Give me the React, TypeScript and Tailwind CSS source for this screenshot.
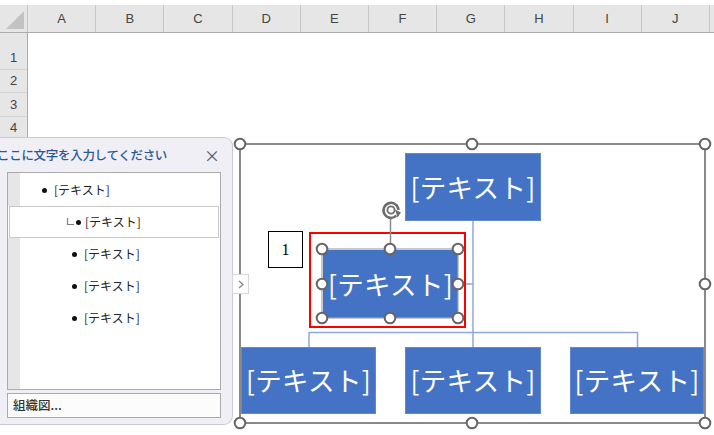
import React from 'react';

const cols = ['A', 'B', 'C', 'D', 'E', 'F', 'G', 'H', 'I', 'J'];
// rows 5 and below sit behind the text pane, so their numbers are left out
const rows = [
  { n: '1', h: 'h-[37px]' },
  { n: '2', h: 'h-[23px]' },
  { n: '3', h: 'h-[24px]' },
  { n: '4', h: 'h-[23px]' },
  { n: '', h: 'h-[23px]' },
  { n: '', h: 'h-[23px]' },
  { n: '', h: 'h-[23px]' },
  { n: '', h: 'h-[23px]' },
  { n: '', h: 'h-[23px]' },
  { n: '', h: 'h-[23px]' },
  { n: '', h: 'h-[23px]' },
  { n: '', h: 'h-[23px]' },
  { n: '', h: 'h-[23px]' },
  { n: '', h: 'h-[23px]' },
  { n: '', h: 'h-[23px]' },
];

const items = [
  { level: 1, selected: false },
  { level: 2, selected: true },
  { level: 2, selected: false },
  { level: 2, selected: false },
  { level: 2, selected: false },
];

function Sheet() {
  return (
    <div className="font-['Liberation_Sans',sans-serif] text-[13px] text-[#444]">
      <div className="h-[5px]" />
      <div className="grid grid-cols-[28px_repeat(10,68.2px)_1fr] h-[28px] bg-[#E6E6E6] border-b border-[#ABABAB]">
        <div className="relative border-r border-[#C6C6C6]">
          <svg className="absolute left-0 top-0" width="28" height="28">
            <polygon points="24,6 24,24 6,24" fill="#C2C2C2" />
          </svg>
        </div>
        {cols.map((c) => (
          <div key={c} className="flex items-center justify-center border-r border-[#C6C6C6]">
            {c}
          </div>
        ))}
        <div />
      </div>
      <div className="flex">
        <div className="w-[28px] bg-[#E6E6E6] border-r border-[#ABABAB]">
          {rows.map((r, i) => (
            <div key={i} className={`${r.h} flex items-end justify-center pb-[2px] border-b border-[#D4D4D4]`}>
              {r.n}
            </div>
          ))}
        </div>
        <div className="flex-1 bg-white" />
      </div>
    </div>
  );
}

function TextPane() {
  return (
    <div className="absolute left-0 top-[137px] w-[233px] h-[288px] bg-[#EFEFF5] border-t border-r border-b border-[#C9C9D2] rounded-r-[9px] flex flex-col font-['Noto_Sans_CJK_JP',sans-serif] overflow-hidden">
      <div className="h-[34px] flex items-center justify-between pr-[12px]">
        <span className="ml-[-3px] whitespace-nowrap text-[12.5px] tracking-[-0.3px] font-medium text-[#2B5797]">ここに文字を入力してください</span>
        <span className="text-[16px] leading-none text-[#555]">×</span>
      </div>
      <div className="ml-[7px] w-[214px] h-[218px] border border-[#ABABAB] bg-white flex flex-col">
        <div className="flex h-[1px]">
          <div className="w-[12px] bg-[#E6E6E6]" />
        </div>
        {items.map((it, i) =>
          it.selected ? (
            <div key={i} className="h-[32px] mx-[1px] border border-[#C8C8C8] flex items-center">
              <div className="w-[66px] flex justify-end pr-[1px]">
                <svg width="9" height="10">
                  <path d="M1.5 1 V7.5 H8" stroke="#808080" strokeWidth="1.2" fill="none" />
                </svg>
              </div>
              <span className="w-[5px] h-[5px] rounded-full bg-[#111]" />
              <span className="ml-[4px] text-[12px] text-[#222]">[テキスト]</span>
            </div>
          ) : (
            <div key={i} className="h-[32px] flex">
              <div className="w-[12px] bg-[#E6E6E6]" />
              <div className="flex items-center" style={{ paddingLeft: it.level === 1 ? 22 : 52 }}>
                <span className="w-[5px] h-[5px] rounded-full bg-[#111]" />
                <span className="ml-[7px] text-[12px] text-[#222]">[テキスト]</span>
              </div>
            </div>
          )
        )}
        <div className="flex flex-1">
          <div className="w-[12px] bg-[#E6E6E6]" />
        </div>
      </div>
      <div className="ml-[7px] mt-[3px] w-[214px] h-[25px] border border-[#ABABAB] bg-[#FCFCFC] flex items-center pl-[5px]">
        <span className="text-[12.5px] font-medium text-[#333]">組織図...</span>
      </div>
    </div>
  );
}

const boxText =
  "whitespace-nowrap text-white text-[26.5px] tracking-[0.3px] font-['Noto_Sans_CJK_JP',sans-serif] leading-none";

function Box({ x, y, w, h }: { x: number; y: number; w: number; h: number }) {
  return (
    <div
      className="absolute bg-[#4472C4] border border-[#6288CF] flex items-center justify-center"
      style={{ left: x, top: y, width: w, height: h }}
    >
      <span className={boxText}>[テキスト]</span>
    </div>
  );
}

const handles: [number, number][] = [
  [240, 144], [472, 144], [705, 144], [705, 284],
  [240, 423], [472, 423], [705, 423],
  [322, 249], [390, 249], [458, 249], [322, 284], [458, 284],
  [322, 318], [390, 318], [458, 318],
];

function Diagram() {
  return (
    <>
      <svg className="absolute left-0 top-0 pointer-events-none" width="714" height="435">
        <g stroke="#8FA8D8" strokeWidth="1.5" fill="none">
          <path d="M473 221 V347" />
          <path d="M309 332.5 H637.5" />
          <path d="M309 332 V347" />
          <path d="M637.5 332 V347" />
          <path d="M458 284 H473" />
        </g>
      </svg>
      <Box x={405} y={153} w={136} h={68} />
      <Box x={241} y={347} w={135} h={67} />
      <Box x={405} y={347} w={136} h={67} />
      <Box x={570} y={347} w={134} h={67} />
      <div className="absolute left-[323px] top-[250px] w-[135px] h-[68px] bg-[#4472C4] flex items-center justify-center">
        <span className={boxText}>[テキスト]</span>
      </div>
      <div className="absolute left-[268px] top-[231px] w-[35px] h-[37px] border border-black bg-white flex items-center justify-center font-['Liberation_Serif',serif] text-[16px] text-black">
        1
      </div>
      <svg className="absolute left-0 top-0 pointer-events-none" width="714" height="435">
        <rect x="240" y="144" width="465" height="279" fill="none" stroke="#8A8A8A" strokeWidth="2" />
        <rect x="322" y="249" width="136" height="69" fill="none" stroke="#A6A6A6" strokeWidth="1.2" />
        <rect x="310" y="233" width="155" height="94" fill="none" stroke="#FF0000" strokeWidth="2" />
        <path d="M390.5 219 V249" stroke="#8A8A8A" strokeWidth="1.5" />
        <circle cx="391" cy="210" r="9" fill="white" />
        <path d="M396.5 215.5 A7.5 7.5 0 1 1 398.5 210" stroke="#6B6B6B" strokeWidth="2.5" fill="none" />
        <path d="M395 209.5 L401 212.5 L397.5 217.5" fill="#6B6B6B" />
        <circle cx="391" cy="210" r="3.6" fill="white" stroke="#6B6B6B" strokeWidth="1.8" />
        {handles.map(([x, y], i) => (
          <circle key={i} cx={x} cy={y} r="5.3" fill="white" stroke="#666" strokeWidth="2" />
        ))}
      </svg>
      <div className="absolute left-[232px] top-[274px] w-[17px] h-[20px] bg-white border border-[#D6D6D6] flex items-center justify-center">
        <svg width="6" height="9">
          <path d="M1 1 L5 4.5 L1 8" stroke="#8A8A8A" strokeWidth="1.4" fill="none" />
        </svg>
      </div>
    </>
  );
}

export default function App() {
  return (
    <div className="relative w-[714px] h-[435px] overflow-hidden bg-white">
      <Sheet />
      <TextPane />
      <Diagram />
    </div>
  );
}
